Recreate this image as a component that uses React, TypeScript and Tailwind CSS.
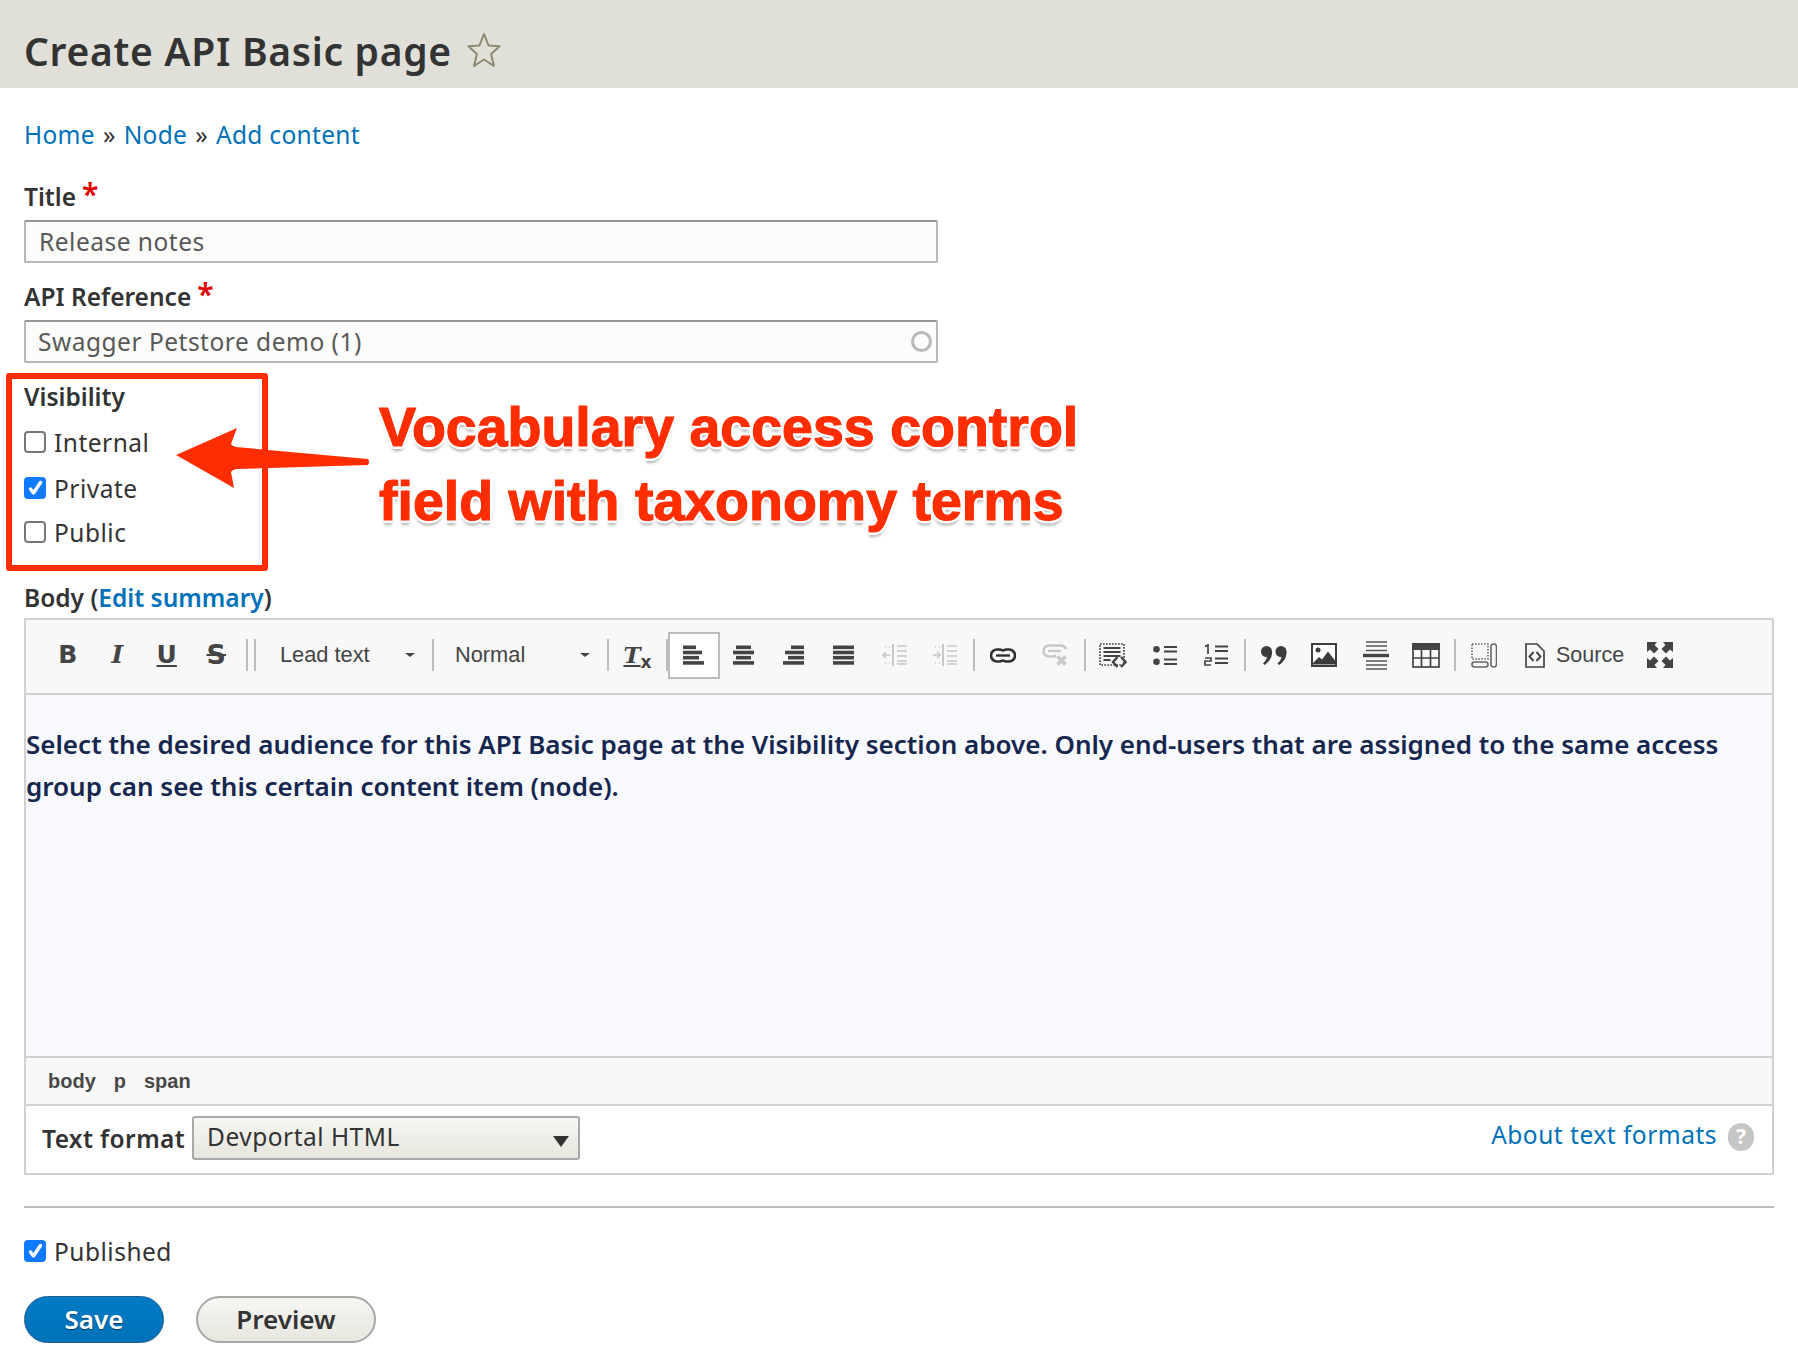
import React from 'react';

const dark = '#444444';
const faint = '#c8c8c8';

function Bars({ rows, color = dark }: { rows: [number, number][]; color?: string }) {
  return (
    <svg width="22" height="20" viewBox="0 0 22 20">
      {rows.map(([x, w], i) => (
        <rect key={i} x={x} y={0.5 + i * 5.2} width={w} height="3.600" fill={color} />
      ))}
    </svg>
  );
}

function IndentIcon({ flip }: { flip?: boolean }) {
  return (
    <svg width="26" height="24" viewBox="0 0 26 24" fill="none" stroke={faint} strokeWidth="1.700">
      <path d="M11 1v22" strokeWidth="2" />
      <path d="M15 3h10M15 8h10M15 13h10M15 18h10M15 21h10" />
      <path d={flip ? 'M1 12h7M5 9l3 3-3 3' : 'M8 12H1M4 9l-3 3 3 3'} />
      <path d="M3 4h1M7 4h1M3 20h1M7 20h1" />
    </svg>
  );
}

function Box({ checked }: { checked?: boolean }) {
  return checked ? (
    <span className="w-[22px] h-[22px] rounded-[4px] bg-[#0f7aff] flex items-center justify-center shrink-0">
      <svg width="15" height="16" viewBox="0 0 15 16" fill="none" stroke="#fff" strokeWidth="3.400" strokeLinecap="round" strokeLinejoin="round">
        <path d="M2.500 9l3 4 7-10.500" />
      </svg>
    </span>
  ) : (
    <span className="w-[22px] h-[22px] rounded-[4px] border-2 border-[#777777] bg-white shrink-0" />
  );
}

function CheckRow({ label, checked, className }: { label: string; checked?: boolean; className: string }) {
  return (
    <label className={`flex items-center gap-[8px] h-[22px] text-[24.500px] tracking-[0.5px] text-[#333333] ${className}`}>
      <Box checked={checked} />
      <span className="mt-[3px]">{label}</span>
    </label>
  );
}

function Sep({ className = '' }: { className?: string }) {
  return <span className={`w-[2px] h-[32px] bg-[#bcbcbc] shrink-0 ${className}`} />;
}

function Tool({ children, className }: { children: React.ReactNode; className: string }) {
  return <span className={`flex items-center justify-center h-[47px] shrink-0 ${className}`}>{children}</span>;
}

function Combo({ label, className }: { label: string; className: string }) {
  return (
    <span className={`flex items-center justify-between shrink-0 text-[21.800px] text-[#444444] font-['Liberation_Sans',sans-serif] ${className}`}>
      {label}
      <span className="w-0 h-0 border-x-[5px] border-x-transparent border-t-[4px] border-t-[#444444]" />
    </span>
  );
}

function Toolbar() {
  return (
    <div className="flex items-center h-[75px] pl-[17px] pb-[3px] bg-[#f8f8f8] border-b-2 border-[#d1d1d1] text-[#444444]">
      <Tool className="w-[49.500px]">
        <span className="font-['DejaVu_Sans',sans-serif] font-bold text-[25px]">B</span>
      </Tool>
      <Tool className="w-[49.500px]">
        <span className="font-['DejaVu_Serif',serif] font-bold italic text-[25px]">I</span>
      </Tool>
      <Tool className="w-[49.500px]">
        <span className="font-['DejaVu_Sans',sans-serif] font-bold text-[25px] underline underline-offset-2">U</span>
      </Tool>
      <Tool className="w-[49.500px]">
        <span className="font-['DejaVu_Sans',sans-serif] font-bold text-[27px] line-through">S</span>
      </Tool>
      <Sep className="ml-[5px]" />
      <Sep className="ml-[6px]" />
      <Combo label="Lead text" className="w-[159px] pl-[24px]" />
      <Sep className="ml-[17px]" />
      <Combo label="Normal" className="w-[156px] pl-[21px]" />
      <Sep className="ml-[17px]" />
      <Tool className="w-[57px]">
        <span className="relative font-['DejaVu_Serif',serif] font-bold italic text-[23px] underline underline-offset-2 pr-[11px]">
          T<span className="absolute right-0 bottom-[-3px] text-[17px] not-italic font-['DejaVu_Sans',sans-serif]">x</span>
        </span>
      </Tool>
      <Sep />
      <span className="flex items-center justify-center w-[52px] h-[47px] bg-white border-2 border-[#bcbcbc] shrink-0">
        <Bars rows={[[0, 13], [0, 19], [0, 16], [0, 21]]} />
      </span>
      <Tool className="w-[50px] ml-[-1px]">
        <Bars rows={[[3, 15], [0, 21], [3, 15], [0, 21]]} />
      </Tool>
      <Tool className="w-[50px]">
        <Bars rows={[[8, 13], [2, 19], [5, 16], [0, 21]]} />
      </Tool>
      <Tool className="w-[50px]">
        <Bars rows={[[0, 21], [0, 21], [0, 21], [0, 21]]} />
      </Tool>
      <Tool className="w-[51px]">
        <IndentIcon />
      </Tool>
      <Tool className="w-[50px]">
        <IndentIcon flip />
      </Tool>
      <Sep className="ml-[3px]" />
      <Tool className="w-[56px]">
        <svg width="26" height="15" viewBox="0 0 26 15" fill="none" stroke="#2f2f2f" strokeWidth="2.600">
          <path d="M10 1.500H7a6 6 0 0 0 0 12h3l3-1 3 1h3a6 6 0 0 0 0-12h-3l-3 1z" />
          <path d="M6 7.500h14" strokeWidth="2.400" />
        </svg>
      </Tool>
      <Tool className="w-[48px]">
        <svg width="26" height="24" viewBox="0 0 26 24" fill="none" stroke={faint} strokeWidth="2.600">
          <path d="M10 2.500H7a5.500 5.500 0 0 0 0 11h5l2-1M10 2.500h9a5.500 5.500 0 0 1 5 3.500" />
          <path d="M6 8h13" strokeWidth="2.200" />
          <path d="M15.500 13.500l8 8M23.500 13.500l-8 8" strokeWidth="3.400" />
        </svg>
      </Tool>
      <Sep className="ml-[5px]" />
      <Tool className="w-[54px]">
        <svg width="28" height="25" viewBox="0 0 28 25" fill="none" stroke="#444444">
          <rect x="1" y="1" width="24" height="21" strokeWidth="1.700" strokeDasharray="1.700 1.300" />
          <path d="M4.500 5h17M4.500 9h17M4.500 13h17M4.500 17h7" strokeWidth="2" />
          <path d="M18.500 14l-4.500 5 4.500 5M22 14l4.500 5-4.500 5" strokeWidth="2.400" />
        </svg>
      </Tool>
      <Tool className="w-[50px]">
        <svg width="24" height="21" viewBox="0 0 24 21" fill="#444444">
          <circle cx="3.500" cy="4.200" r="3.300" />
          <circle cx="3.500" cy="16.800" r="3.300" />
          <rect x="11" y="1" width="13" height="2" />
          <rect x="11" y="5.500" width="13" height="2" />
          <rect x="11" y="13.500" width="13" height="2" />
          <rect x="11" y="18" width="13" height="2" />
        </svg>
      </Tool>
      <Tool className="w-[52px]">
        <svg width="24" height="22" viewBox="0 0 24 22" fill="none" stroke="#444444" strokeWidth="1.700">
          <path d="M1 2.500l3-1.500v9M1 14h6v3H1v4h6" />
          <path d="M11 2.500h13M11 7h13M11 14.500h13M11 19h13" strokeWidth="2" />
        </svg>
      </Tool>
      <Sep className="ml-[2px]" />
      <Tool className="w-[56px]">
        <svg width="26" height="19" viewBox="0 0 26 19" fill="#3c3c3c">
          <circle cx="5.500" cy="5.500" r="5.500" />
          <path d="M11 5.500C11.500 11 8 16.500 3.500 19L2 17.500c3-2.500 4-5 4-8z" />
          <circle cx="20" cy="5.500" r="5.500" />
          <path d="M25.500 5.500C26 11 22.500 16.500 18 19l-1.500-1.500c3-2.500 4-5 4-8z" />
        </svg>
      </Tool>
      <Tool className="w-[44px]">
        <svg width="26" height="24" viewBox="0 0 26 24">
          <rect x="1" y="1" width="24" height="22" fill="#fff" stroke="#3c3c3c" strokeWidth="2" />
          <circle cx="7" cy="7" r="2.500" fill="#3c3c3c" />
          <path d="M2 20l6-6 3 2.500 6-8 7 9v4H2z" fill="#3c3c3c" />
        </svg>
      </Tool>
      <Tool className="w-[60px]">
        <svg width="26" height="29" viewBox="0 0 26 29" fill="none" stroke="#555555" strokeWidth="1.700">
          <path d="M3 1h21M3 5h21M3 9.500h21M3 20h21M3 24h21M3 28h21" />
          <path d="M0 14.500h26" stroke="#444444" strokeWidth="3.400" />
        </svg>
      </Tool>
      <Tool className="w-[40px]">
        <svg width="28" height="25" viewBox="0 0 28 25" fill="none" stroke="#444444" strokeWidth="1.700">
          <rect x="0" y="0" width="28" height="7" fill="#444444" stroke="none" />
          <rect x="1" y="1" width="26" height="23" />
          <path d="M1 15h26M9.500 7v17M18.500 7v17" />
        </svg>
      </Tool>
      <Sep className="ml-[8px]" />
      <Tool className="w-[56px]">
        <svg width="26" height="25" viewBox="0 0 26 25" fill="none" stroke="#666666" strokeWidth="1.600">
          <rect x="1" y="1" width="16" height="15" strokeDasharray="1.600 1.400" />
          <rect x="1" y="19" width="16" height="5" rx="2.500" />
          <rect x="20" y="1" width="5.500" height="23" rx="2.700" />
        </svg>
      </Tool>
      <Tool className="w-[118px] ml-[13px] gap-[11px] justify-start">
        <svg width="20" height="25" viewBox="0 0 20 25" fill="none" stroke="#444444" strokeWidth="1.700">
          <path d="M1 1h11l7 7v16H1z" />
          <path d="M8.500 9l-4 4.500 4 4.500M11.500 9l4 4.500-4 4.500" strokeWidth="2" />
        </svg>
        <span className="font-['Liberation_Sans',sans-serif] text-[21.500px]">Source</span>
      </Tool>
      <Tool className="w-[26px] ml-[4px]">
        <svg width="26" height="26" viewBox="0 0 26 26" fill="#444444">
          <path d="M0 0h10L7.500 3l4 4-4.500 4.500-4-4L0 10z" />
          <path d="M26 0H16l2.500 3-4 4 4.500 4.500 4-4 3 2.500z" />
          <path d="M0 26h10l-2.500-3 4-4L7 14.500l-4 4L0 16z" />
          <path d="M26 26H16l2.500-3-4-4 4.500-4.500 4 4 3-2.500z" />
        </svg>
      </Tool>
    </div>
  );
}

export default function App() {
  return (
    <div className="relative h-[1372px] bg-white overflow-hidden font-['Noto_Sans',sans-serif] text-[#333333]">
      <header className="h-[88px] bg-[#e0e0d8] flex items-center pl-[24px] pt-[14px] gap-[15px]">
        <h1 className="text-[39px] font-semibold text-[#333333] tracking-[0.7px]">Create API Basic page</h1>
        <svg width="34" height="36" viewBox="0 0 34 36" fill="none" stroke="#8b8b72" strokeWidth="2" strokeLinejoin="round" className="mt-[-2px]">
          <path d="M17 2l4.600 11.500 11 .8-8.500 7.700 2.800 12L17 27.500 7.100 34l2.800-12-8.500-7.700 11-.8z" />
        </svg>
      </header>

      <main className="px-[24px]">
        <nav className="mt-[32px] h-[30px] flex items-center gap-[8px] text-[24.500px] tracking-[0.3px] text-[#333333]">
          <a className="text-[#0071b8]">Home</a>
          <span>»</span>
          <a className="text-[#0071b8]">Node</a>
          <span>»</span>
          <a className="text-[#0071b8]">Add content</a>
        </nav>

        <label className="mt-[33px] h-[29px] flex items-center gap-[6px] text-[24.500px] font-semibold">
          Title <span className="text-[#e20000] text-[30px] leading-none mt-[-8px]">*</span>
        </label>
        <input
          readOnly
          value="Release notes"
          className="mt-[8px] block w-[914px] h-[43px] px-[13px] bg-[#fcfcfa] border-2 border-[#b8b8b8] border-t-[#959595] rounded-[2px] text-[24.500px] tracking-[0.5px] text-[#595959]"
        />

        <label className="mt-[20px] h-[29px] flex items-center gap-[6px] text-[24.500px] font-semibold">
          API Reference <span className="text-[#e20000] text-[30px] leading-none mt-[-8px]">*</span>
        </label>
        <div className="relative mt-[8px] w-[914px]">
          <input
            readOnly
            value="Swagger Petstore demo (1)"
            className="block w-full h-[43px] px-[12px] bg-[#fcfcfa] border-2 border-[#b8b8b8] border-t-[#959595] rounded-[2px] text-[24.500px] tracking-[0.5px] text-[#595959]"
          />
          <span className="absolute right-[6px] top-[11px] w-[21px] h-[21px] rounded-full border-[3px] border-[#b9b9b9]" />
        </div>

        <div className="mt-[20px] h-[28px] flex items-center text-[24.500px] font-semibold">Visibility</div>
        <CheckRow label="Internal" className="mt-[20px]" />
        <CheckRow label="Private" checked className="mt-[24px]" />
        <CheckRow label="Public" className="mt-[22px]" />

        <div className="mt-[41px] h-[28px] flex items-center text-[24.500px] font-semibold">
          Body (<a className="text-[#0071b8]">Edit summary</a>)
        </div>

        <div className="mt-[6px] w-[1750px] h-[557px] border-2 border-[#d1d1d1] flex flex-col">
          <Toolbar />
          <div className="h-[361px] bg-[#f8f9fd] pt-[28px] pr-[20px] text-[26px] leading-[42px] font-semibold text-[#15264f]">
            Select the desired audience for this API Basic page at the Visibility section above. Only end-users that are assigned to the same access group can see this certain content item (node).
          </div>
          <div className="h-[50px] bg-[#f8f8f8] border-y-2 border-[#d1d1d1] flex items-center pl-[22px] gap-[18px] text-[20px] font-bold text-[#484848] font-['Liberation_Sans',sans-serif]">
            <span>body</span>
            <span>p</span>
            <span>span</span>
          </div>
          <div className="flex-1 flex items-center pl-[16px] pr-[18px] bg-white">
            <span className="w-[150px] text-[24.500px] tracking-[0.4px] font-semibold">Text format</span>
            <div className="relative w-[388px] h-[44px] mt-[-4px] rounded-[3px] border-2 border-[#a8a8a8] bg-gradient-to-b from-[#f6f6f2] to-[#e6e6de] flex items-center pl-[13px] text-[24.500px] tracking-[0.5px] text-[#333333]">
              Devportal HTML
              <span className="absolute right-[9px] top-[18px] w-0 h-0 border-x-[8px] border-x-transparent border-t-[11px] border-t-[#333333]" />
            </div>
            <a className="ml-auto mt-[-8px] text-[24.500px] tracking-[0.5px] text-[#0071b8]">About text formats</a>
            <span className="ml-[11px] mt-[-6px] w-[26px] h-[28px] rounded-full bg-[#c6c6c6] text-white font-bold text-[21px] flex items-center justify-center">?</span>
          </div>
        </div>

        <hr className="mt-[31px] w-[1750px] border-0 h-[2px] bg-[#bebeb8]" />

        <CheckRow label="Published" checked className="mt-[32px]" />

        <div className="mt-[34px] flex gap-[32px]">
          <button className="w-[140px] h-[47px] rounded-full bg-gradient-to-b from-[#007bc6] to-[#0071b8] border border-[#1e5c90] text-white text-[26px] font-semibold [text-shadow:0_1px_1px_rgba(0,0,0,0.5)]">
            Save
          </button>
          <button className="w-[180px] h-[47px] rounded-full bg-gradient-to-b from-[#f6f6f3] to-[#e7e7df] border-2 border-[#a6a6a6] text-[#333333] text-[26px] font-semibold">
            Preview
          </button>
        </div>
      </main>

      {/* annotation drawn on top of the form */}
      <div className="absolute left-[6px] top-[373px] w-[262px] h-[198px] border-[6px] border-[#ff2d00] rounded-[3px]" />
      <svg className="absolute left-[170px] top-[420px]" width="210" height="76" viewBox="0 0 210 76">
        <path d="M6 35L67 8 61 24Q62 26 66 27L198 39q2 2 0 6L66 49Q62 50 61 52L64 68z" fill="#ff2d00" />
      </svg>
      <div className="absolute left-[379px] top-[390px] font-['Liberation_Sans',sans-serif] font-bold text-[55.500px] leading-[74px] text-[#ff2d00] whitespace-nowrap [-webkit-text-stroke:1.200px_#ff2d00] [text-shadow:3px_0_0_#fff,-3px_0_0_#fff,0_3px_0_#fff,0_-3px_0_#fff,2px_2px_0_#fff,-2px_2px_0_#fff,2px_-2px_0_#fff,-2px_-2px_0_#fff,0_5px_3px_rgba(0,0,0,0.3)]">
        Vocabulary access control
        <br />
        field with taxonomy terms
      </div>
    </div>
  );
}
